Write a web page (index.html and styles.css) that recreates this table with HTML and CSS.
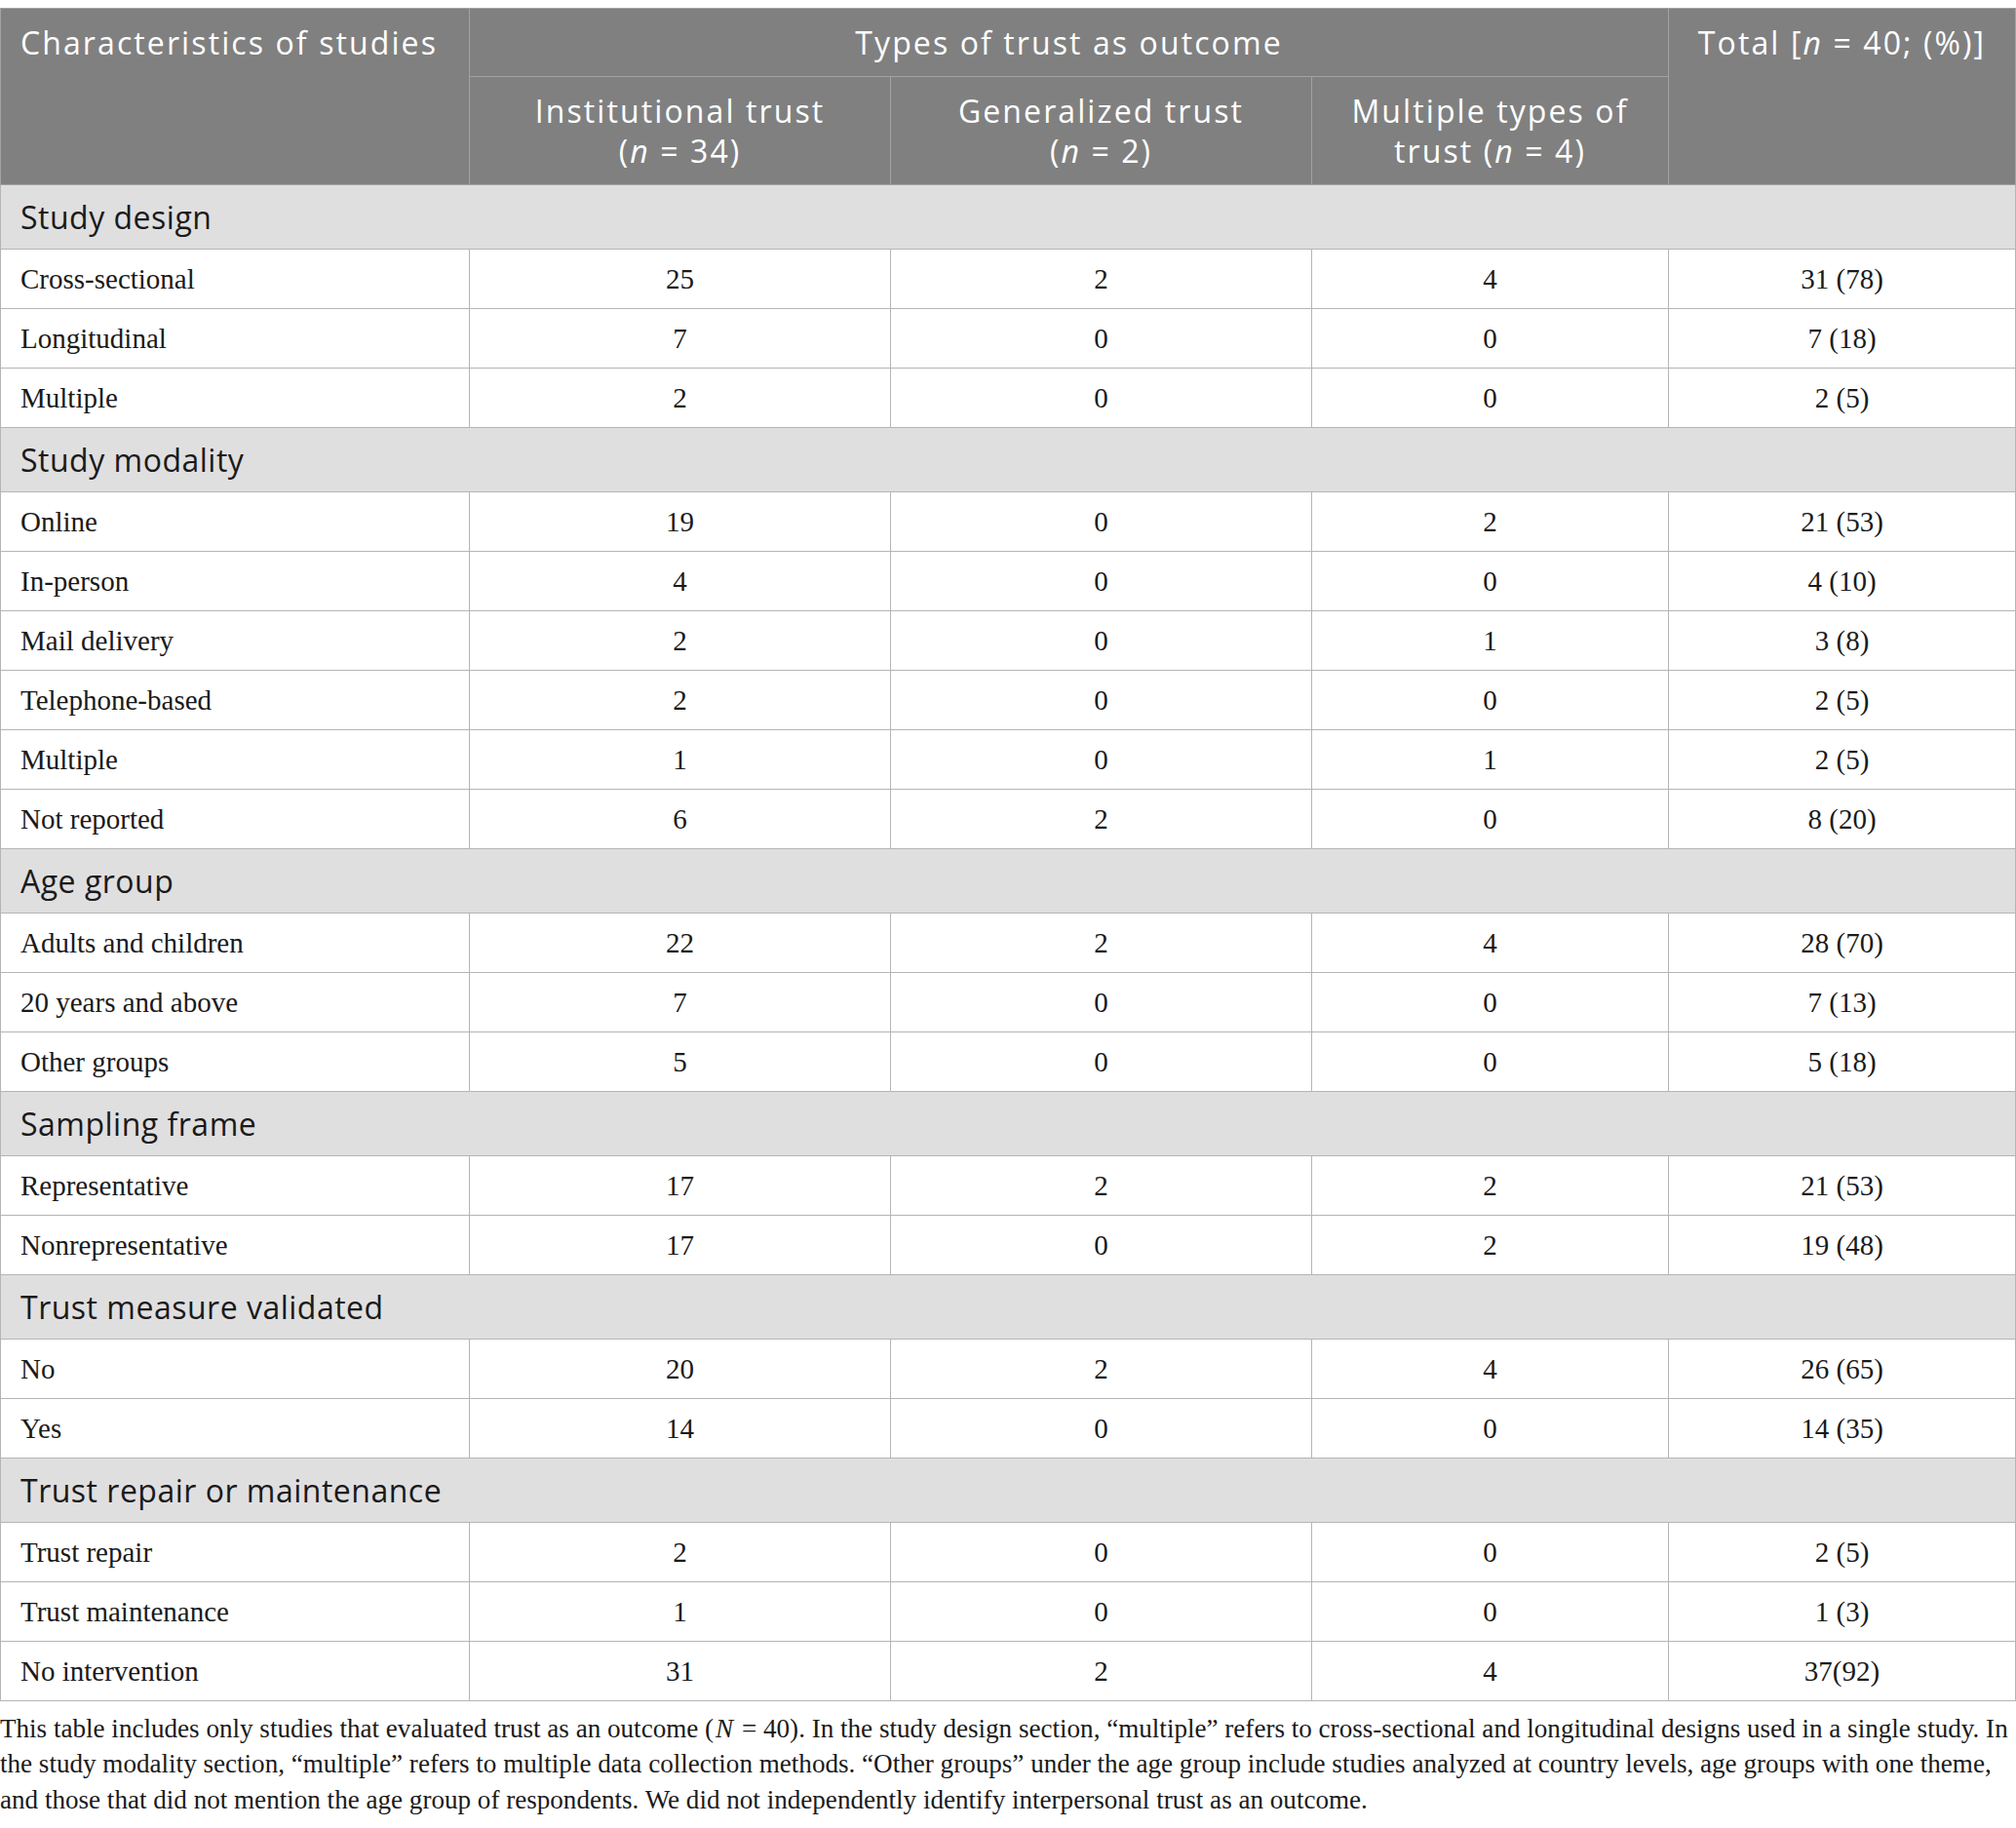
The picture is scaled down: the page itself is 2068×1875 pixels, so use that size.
FILE: index.html
```html
<!DOCTYPE html>
<html lang="en">
<head>
    <meta charset="UTF-8">
    <meta name="viewport" content="width=device-width, initial-scale=1.0">
    <title>Characteristics of studies</title>
    <link rel="stylesheet" href="styles.css">
</head>
<body>
    <div class="wrap">
        <table class="trust-table">
            <colgroup>
                <col class="c-label">
                <col class="c-inst">
                <col class="c-gen">
                <col class="c-multi">
                <col class="c-total">
            </colgroup>
            <thead>
                <tr>
                    <th rowspan="2" class="left">Characteristics of studies</th>
                    <th colspan="3">Types of trust as outcome</th>
                    <th rowspan="2">Total [<i>n</i> = 40; (%)]</th>
                </tr>
                <tr class="sub">
                    <th>Institutional trust<br>(<i>n</i> = 34)</th>
                    <th>Generalized trust<br>(<i>n</i> = 2)</th>
                    <th>Multiple types of<br>trust (<i>n</i> = 4)</th>
                </tr>
            </thead>
            <tbody>
                <tr class="section"><td colspan="5">Study design</td></tr>
                <tr><td>Cross-sectional</td><td>25</td><td>2</td><td>4</td><td>31 (78)</td></tr>
                <tr><td>Longitudinal</td><td>7</td><td>0</td><td>0</td><td>7 (18)</td></tr>
                <tr><td>Multiple</td><td>2</td><td>0</td><td>0</td><td>2 (5)</td></tr>

                <tr class="section"><td colspan="5">Study modality</td></tr>
                <tr><td>Online</td><td>19</td><td>0</td><td>2</td><td>21 (53)</td></tr>
                <tr><td>In-person</td><td>4</td><td>0</td><td>0</td><td>4 (10)</td></tr>
                <tr><td>Mail delivery</td><td>2</td><td>0</td><td>1</td><td>3 (8)</td></tr>
                <tr><td>Telephone-based</td><td>2</td><td>0</td><td>0</td><td>2 (5)</td></tr>
                <tr><td>Multiple</td><td>1</td><td>0</td><td>1</td><td>2 (5)</td></tr>
                <tr><td>Not reported</td><td>6</td><td>2</td><td>0</td><td>8 (20)</td></tr>

                <tr class="section"><td colspan="5">Age group</td></tr>
                <tr><td>Adults and children</td><td>22</td><td>2</td><td>4</td><td>28 (70)</td></tr>
                <tr><td>20 years and above</td><td>7</td><td>0</td><td>0</td><td>7 (13)</td></tr>
                <tr><td>Other groups</td><td>5</td><td>0</td><td>0</td><td>5 (18)</td></tr>

                <tr class="section"><td colspan="5">Sampling frame</td></tr>
                <tr><td>Representative</td><td>17</td><td>2</td><td>2</td><td>21 (53)</td></tr>
                <tr><td>Nonrepresentative</td><td>17</td><td>0</td><td>2</td><td>19 (48)</td></tr>

                <tr class="section"><td colspan="5">Trust measure validated</td></tr>
                <tr><td>No</td><td>20</td><td>2</td><td>4</td><td>26 (65)</td></tr>
                <tr><td>Yes</td><td>14</td><td>0</td><td>0</td><td>14 (35)</td></tr>

                <tr class="section"><td colspan="5">Trust repair or maintenance</td></tr>
                <tr><td>Trust repair</td><td>2</td><td>0</td><td>0</td><td>2 (5)</td></tr>
                <tr><td>Trust maintenance</td><td>1</td><td>0</td><td>0</td><td>1 (3)</td></tr>
                <tr><td>No intervention</td><td>31</td><td>2</td><td>4</td><td>37(92)</td></tr>
            </tbody>
        </table>
        <p class="note">This table includes only studies that evaluated trust as an outcome (<i class="n">N</i> = 40). In the study design section, “multiple” refers to cross-sectional and longitudinal designs used in a single study. In the study modality section, “multiple” refers to multiple data collection methods. “Other groups” under the age group include studies analyzed at country levels, age groups with one theme, and those that did not mention the age group of respondents. We did not independently identify interpersonal trust as an outcome.</p>
    </div>
</body>
</html>
```

FILE: styles.css
```css
body {
    margin: 0;
    background: #fff;
    color: #1a1a1a;
    font-family: 'Liberation Serif', 'Times New Roman', serif;
}
.wrap {
    padding-top: 8px;
}
.trust-table {
    width: 100%;
    border-collapse: collapse;
    table-layout: fixed;
}
.c-label { width: 481px; }
.c-inst { width: 432px; }
.c-gen { width: 432px; }
.c-multi { width: 366px; }
.trust-table th {
    background: #808080;
    color: #fff;
    font-family: 'Open Sans', 'Noto Sans', sans-serif;
    font-weight: 400;
    font-size: 32px;
    letter-spacing: 2.1px;
    line-height: 41px;
    padding: 14px 14px;
    vertical-align: top;
    text-align: center;
    white-space: nowrap;
    border: 1px solid #a3a3a3;
}
.trust-table th.left {
    text-align: left;
    padding-left: 20px;
}
.trust-table td {
    height: 60px;
    padding: 0 20px;
    font-size: 29px;
    text-align: center;
    vertical-align: middle;
    border: 1px solid #b5b5b5;
}
.trust-table td:first-child {
    text-align: left;
}
.trust-table .section td {
    height: 65px;
    background: #e0dfe0;
    font-family: 'Open Sans', 'Noto Sans', sans-serif;
    font-size: 32px;
    letter-spacing: 0.5px;
    color: #1a1a1a;
}
.note {
    margin: 10px 0 0;
    font-size: 27.1px;
    line-height: 36.4px;
}
.note .n {
    margin-left: 2px;
    padding-right: 2px;
}
```
